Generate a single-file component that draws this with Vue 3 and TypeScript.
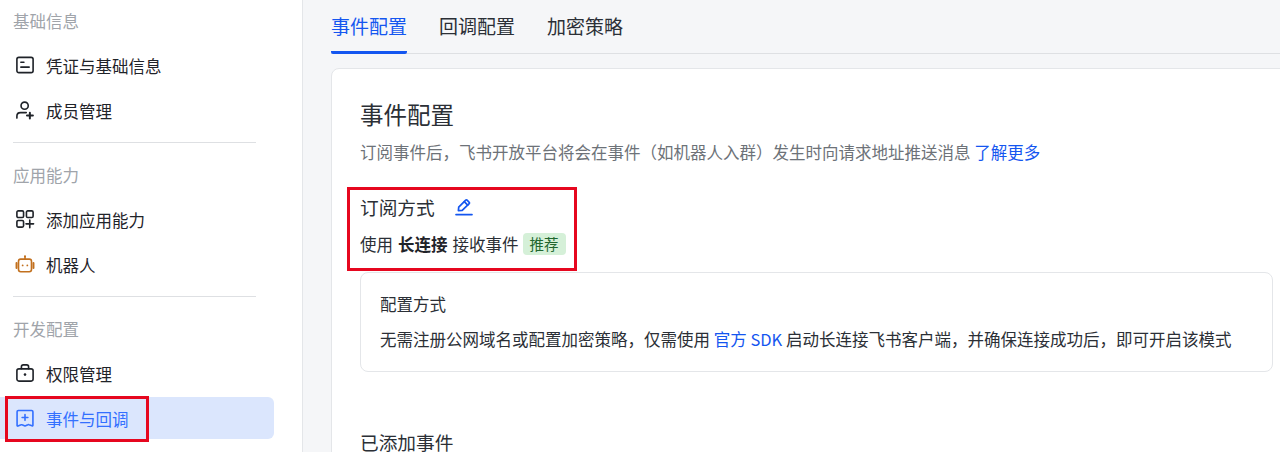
<script setup lang="ts">
interface NavItem {
  label: string;
  icon: string;
  active?: boolean;
}

interface NavGroup {
  title: string;
  items: NavItem[];
}

const groups: NavGroup[] = [
  {
    title: "基础信息",
    items: [
      { label: "凭证与基础信息", icon: "card" },
      { label: "成员管理", icon: "member" }
    ]
  },
  {
    title: "应用能力",
    items: [
      { label: "添加应用能力", icon: "apps" },
      { label: "机器人", icon: "bot" }
    ]
  },
  {
    title: "开发配置",
    items: [
      { label: "权限管理", icon: "lock" },
      { label: "事件与回调", icon: "event", active: true }
    ]
  }
];

const tabs = ["事件配置", "回调配置", "加密策略"];
</script>

<template>
  <div class="page">
    <aside class="sidebar">
      <section v-for="(group, index) in groups" :key="group.title" class="group" :class="{ last: index === groups.length - 1 }">
        <div class="group-title">{{ group.title }}</div>
        <div class="nav-list">
          <div v-for="item in group.items" :key="item.label" class="nav-item" :class="{ active: item.active }">
            <svg class="nav-icon" viewBox="0 0 20 20" fill="none" stroke="currentColor" stroke-width="1.8" stroke-linecap="round" stroke-linejoin="round">
              <template v-if="item.icon === 'card'">
                <rect x="1" y="1.5" width="18" height="17" rx="2.2" />
                <path d="M5.4 7h3.4M5.4 12.4h9.2" />
              </template>
              <template v-else-if="item.icon === 'member'">
                <circle cx="9.6" cy="5.2" r="4" />
                <path d="M1 19v-2.2c0-2.3 1.8-3.9 4-3.9h6.4" />
                <path d="M15.4 13v6.4M12.2 16.2h6.6" stroke-width="2.2" />
              </template>
              <template v-else-if="item.icon === 'apps'">
                <rect x="1" y="1" width="7.4" height="7.4" rx="1.5" />
                <rect x="11.6" y="1" width="7.4" height="7.4" rx="1.5" />
                <rect x="1" y="11.6" width="7.4" height="7.4" rx="1.5" />
                <path d="M15.3 11.2v8.4M11.1 15.4h8.4" />
              </template>
              <g v-else-if="item.icon === 'bot'" class="bot">
                <rect x="2.8" y="4.6" width="14.4" height="14" rx="2.4" />
                <path d="M10 4.4V1.8" />
                <circle cx="10" cy="1.5" r="1.1" fill="currentColor" stroke="none" />
                <path d="M.6 9v5.4M19.4 9v5.4" stroke-width="2.2" />
                <circle cx="7.4" cy="11.6" r="1" fill="currentColor" stroke="none" />
                <circle cx="12.6" cy="11.6" r="1" fill="currentColor" stroke="none" />
              </g>
              <template v-else-if="item.icon === 'lock'">
                <rect x="1" y="5.4" width="18" height="13.6" rx="2.2" />
                <path d="M6 5.2V3.2c0-1.2.9-2.2 2.1-2.2h3.8c1.2 0 2.1 1 2.1 2.2v2" />
                <circle cx="10" cy="11.8" r="1.4" fill="currentColor" stroke="none" />
              </template>
              <template v-else>
                <path d="M2.6 1.6h14.8c.8 0 1.4.6 1.4 1.4v15c0 .5-.5.9-1 .7l-3.4-1.3c-.4-.2-.8-.2-1.2 0L10 18.8l-3.2-1.2c-.4-.2-.8-.2-1.2 0l-3.4 1.3c-.5.2-1-.2-1-.7V3c0-.8.6-1.4 1.4-1.4Z" />
                <path d="M10 6.2v6.4M6.8 9.4h6.4" />
              </template>
            </svg>
            <span class="nav-label">{{ item.label }}</span>
          </div>
        </div>
      </section>
    </aside>

    <main class="main">
      <nav class="tabs">
        <div v-for="(tab, index) in tabs" :key="tab" class="tab" :class="{ active: index === 0 }">{{ tab }}</div>
      </nav>

      <div class="card">
        <h1 class="title">事件配置</h1>
        <p class="desc">订阅事件后，飞书开放平台将会在事件（如机器人入群）发生时向请求地址推送消息 <a class="link">了解更多</a></p>

        <div class="sub-head">
          <h2 class="sub-title">订阅方式</h2>
          <svg class="edit-icon" viewBox="0 0 18 18" fill="none" stroke="currentColor" stroke-width="1.7" stroke-linecap="round" stroke-linejoin="round">
            <path d="M3.4 12.6 3.7 9.2 10.7 2.2c.4-.4 1-.4 1.4 0l2.1 2.1c.4.4.4 1 0 1.4l-7 6.7-3.8.2Z" />
            <path d="m9.3 3.7 3.4 3.4" />
            <path d="M1 16.6h16" />
          </svg>
        </div>
        <div class="mode">
          <span>使用</span>
          <strong>长连接</strong>
          <span>接收事件</span>
          <span class="tag">推荐</span>
        </div>

        <div class="config-box">
          <div class="config-title">配置方式</div>
          <div class="config-text">无需注册公网域名或配置加密策略，仅需使用 <a class="link">官方 SDK</a> 启动长连接飞书客户端，并确保连接成功后，即可开启该模式</div>
        </div>

        <h2 class="added-title">已添加事件</h2>
      </div>
    </main>

    <div class="mark mark-nav"></div>
    <div class="mark mark-mode"></div>
  </div>
</template>

<style>
html,
body {
  margin: 0;
  overflow: hidden;
}
</style>

<style scoped>
.page {
  position: relative;
  display: flex;
  width: 1280px;
  height: 452px;
  overflow: hidden;
  background: #f5f6f8;
  color: #1f2329;
  font-family: "Noto Sans CJK SC", "Liberation Sans", sans-serif;
}

.sidebar {
  flex: none;
  box-sizing: border-box;
  width: 303px;
  padding: 11px 28px 0 0;
  background: #fff;
  border-right: 1px solid #e4e6e9;
}
.group {
  height: 154px;
  box-sizing: border-box;
}
.group::after {
  content: "";
  display: block;
  height: 1px;
  margin: 11px 18px 0 13px;
  background: #dee0e3;
}
.group.last::after { display: none; }
.group-title {
  height: 20px;
  padding-left: 13px;
  margin-bottom: 13px;
  color: #a0a4aa;
  font-size: 16.5px;
  line-height: 20px;
}
.nav-list {
  display: flex;
  flex-direction: column;
  gap: 3px;
}
.nav-item {
  display: flex;
  align-items: center;
  gap: 12px;
  height: 42px;
  padding-left: 16px;
  border-radius: 0 6px 6px 0;
  font-size: 16.5px;
}
.nav-label { padding-top: 1px; }
.nav-item.active {
  background: #dbe6fd;
  color: #3370ff;
}
.nav-icon {
  width: 18px;
  height: 18px;
  flex: none;
  overflow: visible;
}
.bot { color: #c2701e; }

.main {
  flex: 1;
  min-width: 0;
  padding-left: 28px;
}
.tabs {
  display: flex;
  gap: 32px;
  height: 53px;
  border-bottom: 1px solid #dee0e3;
}
.tab {
  height: 53px;
  color: #2b2f36;
  font-size: 19px;
  line-height: 52px;
}
.tab.active {
  color: #1456f0;
  border-bottom: 3px solid #1456f0;
  border-radius: 0 0 2px 2px;
  box-sizing: border-box;
  height: 54px;
}

.card {
  box-sizing: border-box;
  width: 1000px;
  height: 420px;
  margin-top: 14px;
  padding: 28px 28px 0 28px;
  background: #fff;
  border: 1px solid #e4e6e9;
  border-radius: 8px;
}
.title {
  margin: 0;
  color: #2b2f36;
  font-size: 23.5px;
  font-weight: 400;
  line-height: 34px;
}
.desc {
  margin: 9px 0 0;
  color: #6d7278;
  font-size: 16.5px;
  line-height: 24px;
}
.link { color: #1456f0; }
.sub-head {
  display: flex;
  align-items: center;
  gap: 20px;
  margin-top: 29px;
}
.sub-title {
  margin: 0;
  color: #2b2f36;
  font-size: 18.7px;
  font-weight: 400;
  line-height: 28px;
}
.edit-icon {
  width: 18px;
  height: 18px;
  color: #1456f0;
}
.mode {
  display: flex;
  align-items: center;
  gap: 5px;
  margin-top: 11px;
  color: #2b2f36;
  font-size: 16.5px;
  line-height: 24px;
}
.mode strong {
  color: #1f2329;
  font-weight: 700;
}
.tag {
  padding: 0 7px;
  margin-left: -1px;
  border-radius: 4px;
  background: #d5f0d8;
  color: #21662e;
  font-size: 14.5px;
  line-height: 22px;
}
.config-box {
  box-sizing: border-box;
  width: 913px;
  height: 100px;
  margin-top: 16px;
  padding: 19px 19px 0;
  border: 1px solid #e4e6e9;
  border-radius: 8px;
  color: #2b2f36;
}
.config-title {
  font-size: 16.5px;
  line-height: 24px;
}
.config-text {
  margin-top: 11px;
  font-size: 16.5px;
  line-height: 24px;
  white-space: nowrap;
}
.added-title {
  margin: 56px 0 0;
  color: #2b2f36;
  font-size: 18.7px;
  font-weight: 400;
  line-height: 28px;
}

.mark {
  position: absolute;
  box-sizing: border-box;
  border: 3px solid #e6071f;
}
.mark-nav {
  left: 5px;
  top: 396px;
  width: 144px;
  height: 46px;
}
.mark-mode {
  left: 347px;
  top: 187px;
  width: 230px;
  height: 84px;
}
</style>
